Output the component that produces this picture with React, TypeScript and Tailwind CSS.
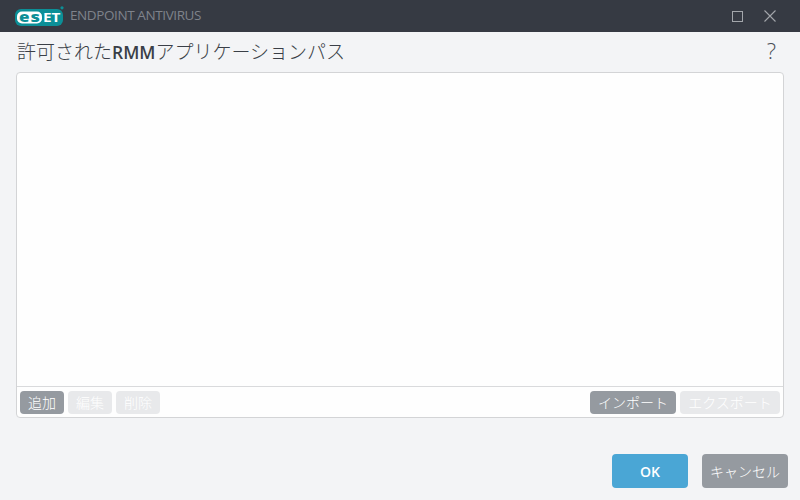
import React from "react";

const jp = "font-['Open_Sans','Noto_Sans_CJK_JP',sans-serif]";

const EsetLogo = () => (
  <svg width="50" height="20" viewBox="0 0 50 20" className="block">
    <rect x="0" y="3" width="48" height="17" rx="6" fill="#0c8f97" />
    <rect x="2" y="5.5" width="25" height="12" rx="5" fill="#ffffff" />
    <circle cx="47" cy="1.8" r="1.6" fill="#0c8f97" />
    <text x="4" y="15.5" fontFamily="Open Sans, sans-serif" fontWeight="800" fontSize="14" fill="#0c8f97" textLength="10.5" lengthAdjust="spacingAndGlyphs">e</text>
    <text x="15.5" y="15.5" fontFamily="Open Sans, sans-serif" fontWeight="800" fontSize="14" fill="#0c8f97" textLength="9.5" lengthAdjust="spacingAndGlyphs">s</text>
    <text x="28" y="15.5" fontFamily="Open Sans, sans-serif" fontWeight="700" fontSize="11.5" fill="#ffffff" textLength="17.5" lengthAdjust="spacingAndGlyphs">ET</text>
  </svg>
);

const SmallButton = ({
  label,
  enabled,
  width,
}: {
  label: string;
  enabled?: boolean;
  width: string;
}) => (
  <div
    className={`${width} h-[23px] flex items-center justify-center rounded-[4px] text-[14px] font-light text-white ${
      enabled ? "bg-[#959aa0]" : "bg-[#e8e9eb]"
    }`}
  >
    {label}
  </div>
);

export default function App() {
  return (
    <div className={`w-[800px] h-[500px] flex flex-col bg-[#f3f4f6] overflow-hidden ${jp}`}>
      <div className="h-8 shrink-0 bg-[#363a43] flex items-center pl-[15px] pr-[24px]">
        <EsetLogo />
        <span className="ml-[5px] text-[13.5px] leading-none tracking-[-0.4px] text-[#7f838b]">ENDPOINT ANTIVIRUS</span>
        <div className="ml-auto flex items-center gap-[21px]">
          <svg width="11" height="11" viewBox="0 0 11 11">
            <rect x="0.5" y="0.5" width="10" height="10" fill="none" stroke="#a3a6ab" />
          </svg>
          <svg width="12" height="12" viewBox="0 0 12 12">
            <path d="M0.5 0.5 L11.5 11.5 M11.5 0.5 L0.5 11.5" fill="none" stroke="#a3a6ab" strokeWidth="1.1" />
          </svg>
        </div>
      </div>

      <div className="h-10 shrink-0 flex items-center justify-between pl-[17px] pr-6">
        <span className="text-[19px] leading-none text-[#3a3f47] font-light">
          許可された<span className="font-semibold text-[17.5px]">RMM</span>アプリケーションパス
        </span>
        <span className="text-[22px] leading-none text-[#4a4f57] font-light -translate-y-[2px]">?</span>
      </div>

      <div className="mx-4 h-[346px] shrink-0 flex flex-col bg-[#fefefe] border border-[#d3d4d6] rounded-[4px]">
        <div className="flex-1" />
        <div className="h-[31px] shrink-0 border-t border-[#d9dadc] flex items-center justify-between px-[3px]">
          <div className="flex gap-1">
            <SmallButton label="追加" enabled width="w-[44px]" />
            <SmallButton label="編集" width="w-[44px]" />
            <SmallButton label="削除" width="w-[44px]" />
          </div>
          <div className="flex gap-1">
            <SmallButton label="インポート" enabled width="w-[86px]" />
            <SmallButton label="エクスポート" width="w-[100px]" />
          </div>
        </div>
      </div>

      <div className="flex-1 flex items-start justify-end gap-[14px] pt-[36px] pr-[12px]">
        <div className="w-[76px] h-[34px] flex items-center justify-center rounded-[4px] bg-[#4aa6d5] text-[14px] font-semibold text-white">
          OK
        </div>
        <div className="w-[86px] h-[34px] flex items-center justify-center rounded-[4px] bg-[#959aa0] text-[14px] font-light text-white">
          キャンセル
        </div>
      </div>
    </div>
  );
}
